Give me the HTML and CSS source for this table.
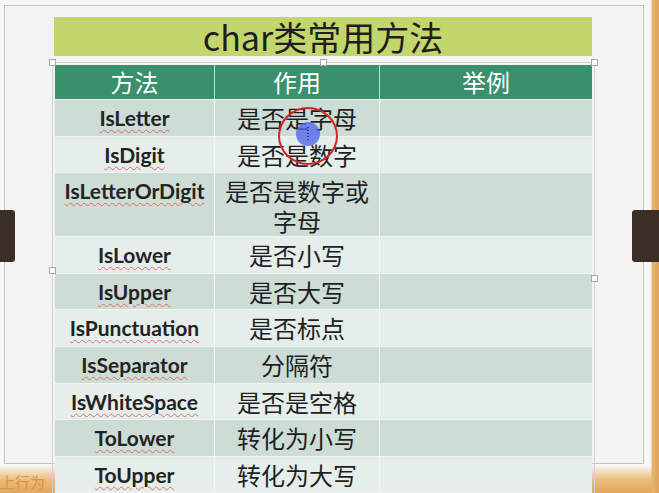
FILE: index.html
```html
<!DOCTYPE html>
<html lang="zh-CN">
<head>
<meta charset="utf-8">
<title>char类常用方法</title>
<link rel="stylesheet" href="styles.css">
</head>
<body>
<div class="slide">
  <div class="title">char类常用方法</div>
  <div class="tablebox">
    <table class="grid">
      <colgroup><col class="c1"><col class="c2"><col class="c3"></colgroup>
      <thead>
        <tr><th>方法</th><th>作用</th><th>举例</th></tr>
      </thead>
      <tbody>
        <tr><td class="en"><span class="sp">IsLetter</span></td><td>是否是字母</td><td></td></tr>
        <tr><td class="en"><span class="sp">IsDigit</span></td><td>是否是数字</td><td></td></tr>
        <tr class="tall"><td class="en"><span class="sp">IsLetterOrDigit</span></td><td><span class="ln">是否是数字或</span><span class="ln">字母</span></td><td></td></tr>
        <tr><td class="en"><span class="sp">IsLower</span></td><td>是否小写</td><td></td></tr>
        <tr><td class="en"><span class="sp">IsUpper</span></td><td>是否大写</td><td></td></tr>
        <tr><td class="en"><span class="sp">IsPunctuation</span></td><td>是否标点</td><td></td></tr>
        <tr><td class="en"><span class="sp">IsSeparator</span></td><td>分隔符</td><td></td></tr>
        <tr><td class="en"><span class="sp">IsWhiteSpace</span></td><td>是否是空格</td><td></td></tr>
        <tr><td class="en"><span class="sp">ToLower</span></td><td>转化为小写</td><td></td></tr>
        <tr><td class="en"><span class="sp">ToUpper</span></td><td>转化为大写</td><td></td></tr>
      </tbody>
    </table>
    <span class="handle h-tl"></span>
    <span class="handle h-tm"></span>
    <span class="handle h-tr"></span>
    <span class="handle h-ml"></span>
    <span class="handle h-mr"></span>
  </div>
</div>
<div class="status">上行为</div>
<div class="tab tab-left"></div>
<div class="tab tab-right"></div>
<div class="pen-circle"></div>
<div class="cursor-dot"><span class="ibeam"></span></div>
</body>
</html>
```
FILE: styles.css
```css
html, body {
  margin: 0;
  padding: 0;
}

body {
  box-sizing: border-box;
  width: 659px;
  height: 493px;
  overflow: hidden;
  position: relative;
  padding: 5px 0 0 4px;
  font-family: "Noto Sans CJK SC", "Noto Sans", sans-serif;
  background:
    linear-gradient(to right, rgba(0,0,0,0) 0, rgba(0,0,0,0) 651px, #e8b571 652px, #dea45c 659px),
    linear-gradient(to bottom, #f7f7f7 0, #f7f7f7 465px, #f4e4cc 470px, #ebbb78 480px, #e2a85e 493px);
}

.slide {
  box-sizing: border-box;
  width: 640px;
  height: 459px;
  border: 1px solid #c9c5a6;
  background: #f3f3f3;
  padding: 11px 0 0 49px;
}

.title {
  width: 538px;
  height: 39px;
  background: #c3d66b;
  color: #1e1e1e;
  font-size: 34px;
  line-height: 39px;
  text-align: center;
}

.tablebox {
  position: relative;
  width: 537px;
  margin: 6px 0 0 -2px;
  padding: 2px;
  border: 1px solid #d2d2d2;
}

.grid {
  width: 537px;
  table-layout: fixed;
  border-collapse: separate;
  border-spacing: 0;
}

.c1 { width: 160px; }
.c2 { width: 165px; }
.c3 { width: 212px; }

.grid th {
  box-sizing: border-box;
  height: 35px;
  padding: 0;
  background: #3a8f6c;
  color: #ffffff;
  font-weight: normal;
  font-size: 24px;
  line-height: 34px;
  text-align: center;
  border-right: 1px solid #bfe3d2;
  border-bottom: 1px solid #e8f2ee;
}

.grid th:last-child,
.grid td:last-child {
  border-right: none;
}

.grid tbody tr {
  height: 36.6px;
}

.grid tbody tr.tall {
  height: 63px;
}

.grid td {
  box-sizing: border-box;
  padding: 3px 0 0;
  vertical-align: top;
  text-align: center;
  color: #1f1f1f;
  font-size: 24px;
  line-height: 30px;
  border-right: 1px solid #f2f7f5;
  border-bottom: 1px solid #eef4f1;
}

.ln {
  display: block;
  height: 30px;
}

.grid tbody tr:nth-child(odd) td {
  background: #cddcd5;
}

.grid tbody tr:nth-child(even) td {
  background: #e5eeea;
}

.grid td.en {
  font-family: "Lato", "Liberation Sans", sans-serif;
  font-size: 21px;
  font-weight: 700;
  color: #232323;
}

.sp {
  text-decoration: underline wavy #e07070;
  text-decoration-thickness: 1px;
  text-underline-offset: 3px;
}

.handle {
  position: absolute;
  width: 5px;
  height: 5px;
  background: #ffffff;
  border: 1px solid #a8a8a8;
}

.h-tl { left: -4px; top: -4px; }
.h-tm { left: 267px; top: -4px; }
.h-tr { right: -4px; top: -4px; }
.h-ml { left: -4px; top: 204px; }
.h-mr { right: -4px; top: 212px; }

.status {
  margin: 9px 0 0 -4px;
  font-size: 15px;
  line-height: 17px;
  color: #d08a36;
  opacity: 0.75;
}

.tab {
  position: absolute;
  top: 210px;
  height: 52px;
  background: #3a2e27;
}

.tab-left {
  left: 0;
  width: 15px;
  border-radius: 0 3px 3px 0;
}

.tab-right {
  left: 632px;
  width: 27px;
  border-radius: 3px 0 0 3px;
}

.pen-circle {
  position: absolute;
  left: 278px;
  top: 107px;
  width: 56px;
  height: 54px;
  border: 2px solid #d42424;
  border-radius: 50%;
}

.cursor-dot {
  position: absolute;
  left: 296px;
  top: 122px;
  width: 24px;
  height: 24px;
  border-radius: 50%;
  background: rgba(82, 104, 232, 0.8);
}

.ibeam {
  position: absolute;
  left: 11px;
  top: 5px;
  width: 2px;
  height: 15px;
  background: repeating-linear-gradient(to bottom, #2b3a8f 0, #2b3a8f 1px, rgba(0,0,0,0) 1px, rgba(0,0,0,0) 3px);
}
```
